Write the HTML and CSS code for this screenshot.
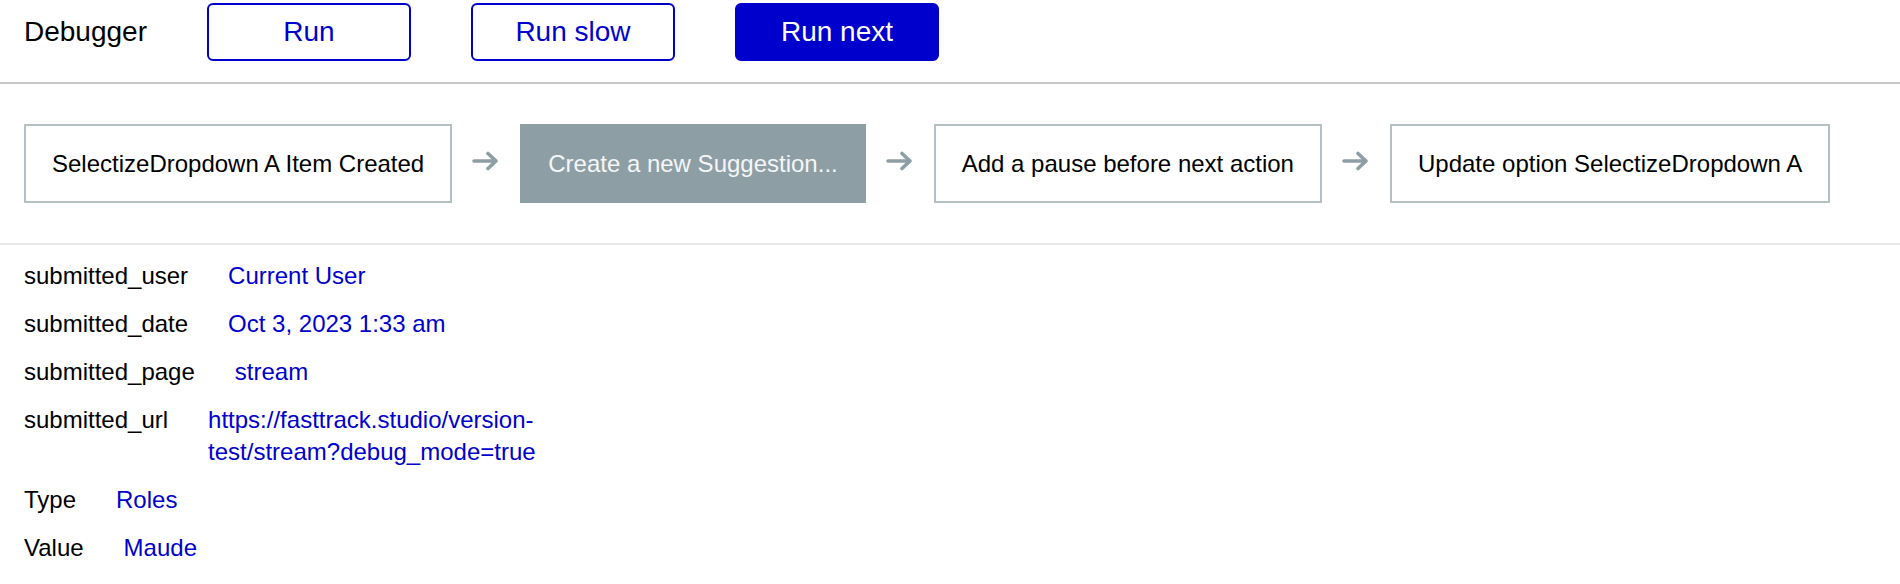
FILE: index.html
```html
<!DOCTYPE html>
<html>
<head>
<meta charset="utf-8">
<link rel="stylesheet" href="styles.css">
</head>
<body>
<header class="toolbar">
  <div class="title">Debugger</div>
  <button class="btn">Run</button>
  <button class="btn">Run slow</button>
  <button class="btn btn-primary">Run next</button>
</header>
<section class="steps">
  <div class="step">SelectizeDropdown A Item Created</div>
  <svg class="arrow" viewBox="0 0 28 20" width="28" height="20"><path d="M2 10 H24 M16 2.5 L24 10 L16 17.5" fill="none" stroke="#8e9ea5" stroke-width="3.6" stroke-linecap="round" stroke-linejoin="round"/></svg>
  <div class="step step-active">Create a new Suggestion...</div>
  <svg class="arrow" viewBox="0 0 28 20" width="28" height="20"><path d="M2 10 H24 M16 2.5 L24 10 L16 17.5" fill="none" stroke="#8e9ea5" stroke-width="3.6" stroke-linecap="round" stroke-linejoin="round"/></svg>
  <div class="step">Add a pause before next action</div>
  <svg class="arrow" viewBox="0 0 28 20" width="28" height="20"><path d="M2 10 H24 M16 2.5 L24 10 L16 17.5" fill="none" stroke="#8e9ea5" stroke-width="3.6" stroke-linecap="round" stroke-linejoin="round"/></svg>
  <div class="step">Update option SelectizeDropdown A</div>
</section>
<section class="details">
  <div class="row"><span class="key">submitted_user</span><span class="val">Current User</span></div>
  <div class="row"><span class="key">submitted_date</span><span class="val">Oct 3, 2023 1:33 am</span></div>
  <div class="row"><span class="key">submitted_page</span><span class="val">stream</span></div>
  <div class="row"><span class="key">submitted_url</span><span class="val val-url">https://fasttrack.studio/version-test/stream?debug_mode=true</span></div>
  <div class="row"><span class="key">Type</span><span class="val">Roles</span></div>
  <div class="row"><span class="key">Value</span><span class="val">Maude</span></div>
</section>
</body>
</html>
```
FILE: styles.css
```css
* { box-sizing: border-box; }
html, body {
  margin: 0;
  padding: 0;
  background: #fff;
  font-family: "Liberation Sans", Arial, Helvetica, sans-serif;
  color: #000;
}
.toolbar {
  display: flex;
  align-items: center;
  gap: 60px;
  padding: 3px 24px 21px;
  border-bottom: 2px solid #c8c8c8;
}
.title {
  font-size: 28px;
  line-height: 32px;
}
.btn {
  width: 204px;
  height: 58px;
  border: 2px solid #0000cc;
  border-radius: 6px;
  background: #fff;
  color: #0000cc;
  font-family: inherit;
  font-size: 28px;
  padding: 0;
}
.btn-primary {
  background: #0000cc;
  color: #fff;
}
.steps {
  display: flex;
  align-items: center;
  gap: 20px;
  padding: 40px 24px 40px;
  border-bottom: 2px solid #e8e8e8;
}
.step {
  height: 79px;
  display: flex;
  align-items: center;
  padding: 0 26px;
  border: 2px solid #b4c0c3;
  font-size: 24px;
  white-space: nowrap;
}
.step-active {
  background: #8e9ea5;
  border-color: #8e9ea5;
  color: #f4f6f7;
}
.arrow {
  flex: none;
  margin-top: -6px;
}
.details {
  display: flex;
  flex-direction: column;
  gap: 16px;
  padding: 15px 24px;
  font-size: 24px;
  line-height: 32px;
}
.row {
  display: flex;
  gap: 40px;
}
.val {
  color: #0000cc;
}
.val-url {
  max-width: 340px;
}
```
